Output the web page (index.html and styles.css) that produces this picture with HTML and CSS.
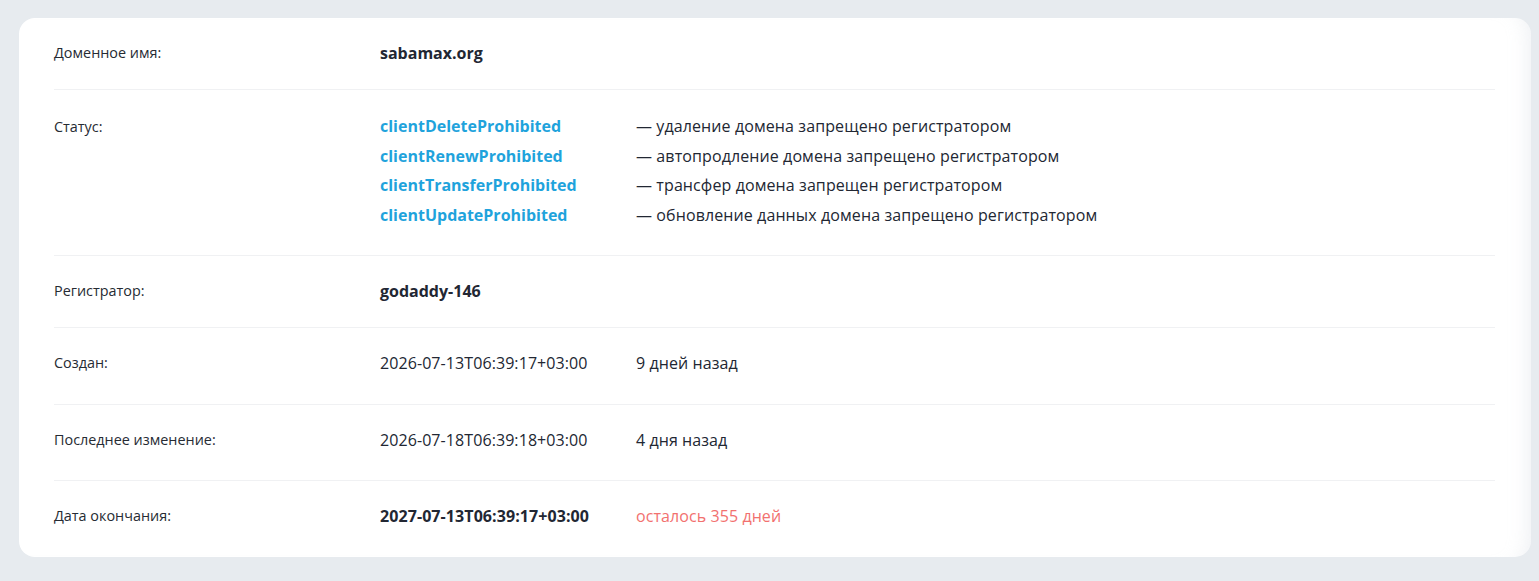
FILE: index.html
```html
<!DOCTYPE html>
<html lang="ru">
<head>
<meta charset="utf-8">
<link rel="stylesheet" href="styles.css">
<title>sabamax.org</title>
</head>
<body>
<div class="page">
  <section class="card">
    <div class="row row-first">
      <div class="label">Доменное имя:</div>
      <div class="value strong">sabamax.org</div>
    </div>
    <div class="row row-status">
      <div class="label">Статус:</div>
      <div class="status-list">
        <a class="status">clientDeleteProhibited</a><span class="desc">— удаление домена запрещено регистратором</span>
        <a class="status">clientRenewProhibited</a><span class="desc">— автопродление домена запрещено регистратором</span>
        <a class="status">clientTransferProhibited</a><span class="desc">— трансфер домена запрещен регистратором</span>
        <a class="status">clientUpdateProhibited</a><span class="desc">— обновление данных домена запрещено регистратором</span>
      </div>
    </div>
    <div class="row row-registrar">
      <div class="label">Регистратор:</div>
      <div class="value strong">godaddy-146</div>
    </div>
    <div class="row row-desc">
      <div class="label">Создан:</div>
      <div class="value">2026-07-13T06:39:17+03:00</div>
      <div class="value">9 дней назад</div>
    </div>
    <div class="row row-desc row-changed">
      <div class="label">Последнее изменение:</div>
      <div class="value">2026-07-18T06:39:18+03:00</div>
      <div class="value">4 дня назад</div>
    </div>
    <div class="row row-last">
      <div class="label">Дата окончания:</div>
      <div class="value strong date">2027-07-13T06:39:17+03:00</div>
      <div class="value warn">осталось 355 дней</div>
    </div>
  </section>
</div>
</body>
</html>
```

FILE: styles.css
```css
* { box-sizing: border-box; }
html, body { margin: 0; padding: 0; }
body {
  background: #e7ebef;
  font-family: "Open Sans", "Noto Sans", sans-serif;
  color: #222733;
}
.page {
  padding: 18px 8px 24px 19px;
}
.card {
  width: 1512px;
  background: #fff;
  border-radius: 16px;
  padding: 0 36px 0 35px;
  box-shadow: inset -22px 0 18px -18px rgba(210, 216, 224, 0.35);
}
.row {
  display: grid;
  grid-template-columns: 326px 256px 1fr;
  align-items: start;
  padding: 23px 0 25px;
  border-bottom: 1px solid #f0f1f3;
}
.row-first { padding-top: 23px; padding-bottom: 24px; }
.row-registrar { padding-bottom: 24px; }
.row-desc { padding-bottom: 29px; }
.row-changed { padding-bottom: 28px; }
.row-last { border-bottom: none; padding-top: 23px; padding-bottom: 29px; }
.label {
  font-size: 14.4px;
  line-height: 24px;
  color: #262b33;
}
.value {
  font-size: 16px;
  line-height: 24px;
  letter-spacing: 0.08px;
  color: #222733;
}
.strong { font-weight: 700; letter-spacing: 0; }
.strong.date { letter-spacing: 0.08px; }
.warn { color: #f2716f; }
.row-status { padding: 22px 0 24px; }
.row-status .label { line-height: 30px; }
.status-list {
  grid-column: 2 / 4;
  display: grid;
  grid-template-columns: 256px 1fr;
  font-size: 16px;
  line-height: 29.7px;
}
.status {
  color: #1fa3dc;
  font-weight: 700;
  text-decoration: none;
  cursor: pointer;
}
.desc { color: #222733; letter-spacing: 0.1px; }
```
